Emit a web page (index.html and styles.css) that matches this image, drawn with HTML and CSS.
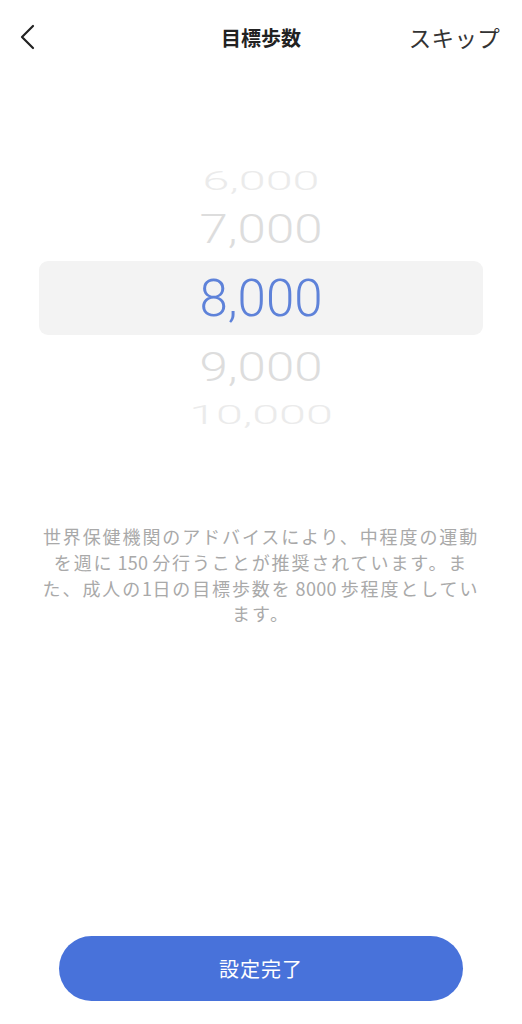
FILE: index.html
```html
<!DOCTYPE html>
<html lang="ja">
<head>
  <meta charset="UTF-8">
  <meta name="viewport" content="width=device-width, initial-scale=1.0">
  <title>目標歩数</title>
  <link rel="stylesheet" href="styles.css">
</head>
<body>
  <div class="screen">
    <header class="topbar">
      <button class="back" aria-label="戻る">
        <svg width="16" height="26" viewBox="0 0 16 26"><path d="M14 2 L3 13 L14 24" fill="none" stroke="#222" stroke-width="2.2" stroke-linecap="round" stroke-linejoin="round"/></svg>
      </button>
      <h1 class="title">目標歩数</h1>
      <button class="skip">スキップ</button>
    </header>

    <div class="picker">
      <div class="row far">6,000</div>
      <div class="row near">7,000</div>
      <div class="row selected">8,000</div>
      <div class="row near">9,000</div>
      <div class="row far">10,000</div>
    </div>

    <p class="note">世界保健機関のアドバイスにより、中程度の運動を週に<span class="num">&thinsp;150&thinsp;</span>分行うことが推奨されています。また、成人の<span class="num">1</span>日の目標歩数を<span class="num">&thinsp;8000&thinsp;</span>歩程度としています。</p>

    <button class="done">設定完了</button>
  </div>
</body>
</html>
```

FILE: styles.css
```css
/* 全体 */
html, body {
  margin: 0; padding: 0; height: 100%;
  background: #fff;
  font-family: "Noto Sans CJK JP", "Noto Sans", sans-serif;
}
button { cursor: pointer; font-family: inherit; background: none; border: none; padding: 0; }

.screen {
  height: 100vh; display: flex; flex-direction: column;
  box-sizing: border-box;
}

/* ヘッダー */
.topbar {
  height: 74px; display: flex; align-items: center; justify-content: space-between;
  padding: 0 22px 0 19px; position: relative;
}
.back { width: 20px; height: 30px; display: flex; align-items: center; }
.title {
  position: absolute; left: 0; right: 0; text-align: center; margin: 0;
  font-size: 20px; font-weight: 700; color: #222; pointer-events: none;
}
.skip { font-size: 22.5px; color: #333; font-weight: 400; letter-spacing: 0.3px; }

/* ホイールピッカー */
.picker {
  margin: 91px 39px 0; display: flex; flex-direction: column;
  font-family: Roboto, "Liberation Sans", sans-serif;
}
.row {
  display: flex; align-items: center; justify-content: center;
  font-size: 51px; font-weight: 300; line-height: 1;
}
.row.far { height: 32px; color: #ebebeb; transform: scale(0.95, 0.5); }
.row.near { height: 64px; color: #dddddd; transform: scaleY(0.8); }
.row.selected {
  height: 74px; color: #5e82d9;
  background: #f3f3f3; border-radius: 9px;
}

/* 説明文 */
.note {
  margin: 93px 36px 0; text-align: center;
  font-size: 18px; line-height: 25.8px; letter-spacing: 1.9px;
  color: #a9a9a9;
}
.note .num { letter-spacing: 0.3px; }

/* 完了ボタン */
.done {
  margin: auto 59px 23px; height: 65px; border-radius: 33px;
  background: #4872da; color: #fff; font-size: 20px; letter-spacing: 1px;
}
```
